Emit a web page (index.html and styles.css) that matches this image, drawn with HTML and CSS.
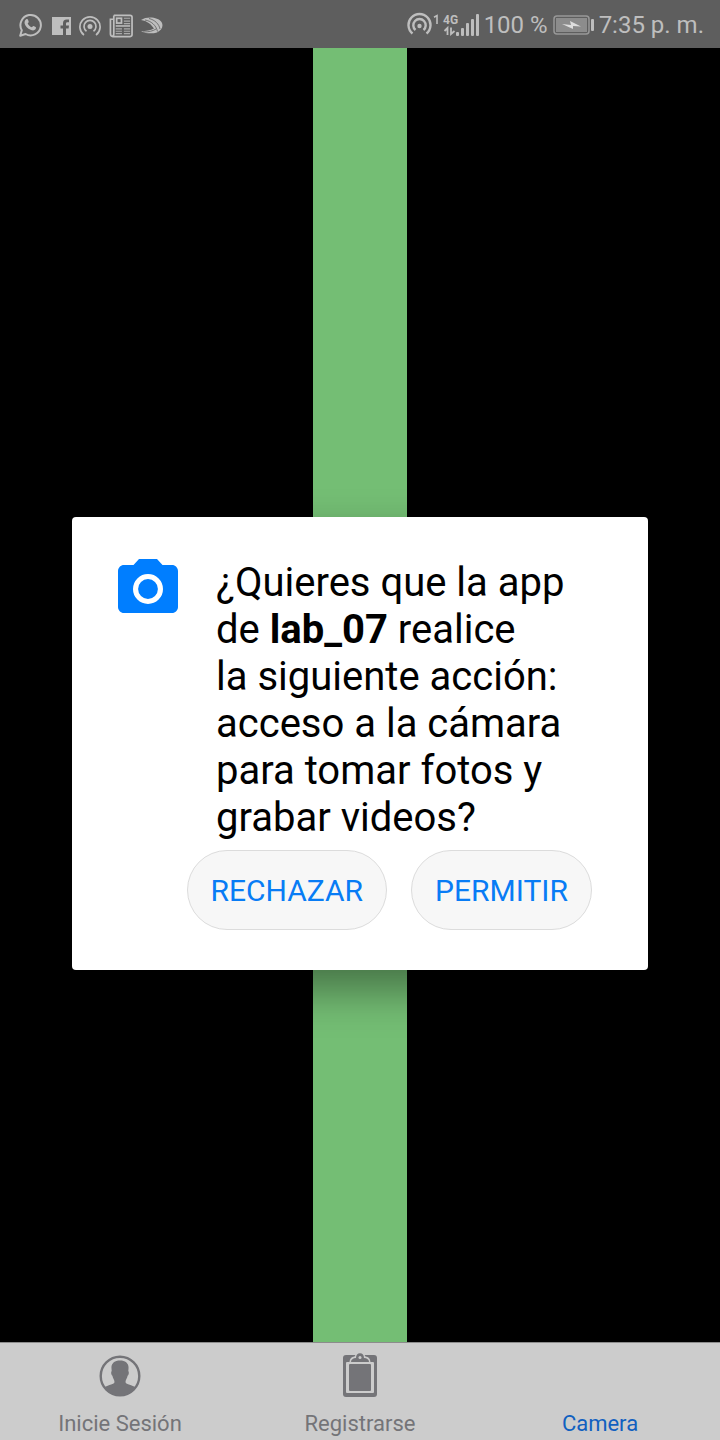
FILE: index.html
```html
<!DOCTYPE html>
<html lang="es">
<head>
<meta charset="utf-8">
<meta name="viewport" content="width=device-width, initial-scale=1">
<title>lab_07</title>
<link rel="stylesheet" href="styles.css">
</head>
<body>
<div class="screen">
  <header class="status">
    <div class="status-left">
      <svg width="24" height="26" viewBox="0 0 24 26" fill="none" stroke="currentColor" stroke-width="2" aria-hidden="true">
        <path d="M1.200 23.800 L2.800 18.200 A10.200 10.200 0 1 1 6.600 22 Z" stroke-linejoin="round"/>
        <path d="M7.200 7.200 C8.200 6.600 8.800 7 9.100 8 L9.700 9.700 C9.900 10.400 8.800 11 8.700 11.500 C9.500 13.300 11 14.700 12.800 15.300 C13.400 15 13.900 13.900 14.600 14.100 L16.600 15.100 C17.300 15.500 16.900 16.900 16.300 17.600 C15.200 18.700 13.400 18.600 11.600 17.800 C8.600 16.500 6.400 14 5.700 11.700 C5.200 9.900 6 7.900 7.200 7.200 Z" fill="currentColor" stroke="none"/>
      </svg>
      <svg width="20" height="26" viewBox="0 0 20 26" aria-hidden="true">
        <path fill="currentColor" d="M1 5 H20 V23 H15 V16.500 H17.600 L18 13.500 H15 V11.800 C15 10.800 15.300 10.300 16.500 10.300 H18 V7.500 H15.800 C13.100 7.500 12 9.100 12 11.300 V13.500 H9.500 V16.500 H12 V23 H1 Z"/>
      </svg>
      <svg width="22" height="26" viewBox="0 0 22 26" fill="none" stroke="currentColor" stroke-width="1.700" aria-hidden="true">
        <path d="M5 23 A10.100 10.100 0 1 1 17 23"/>
        <path d="M7.500 19.200 A6 6 0 1 1 14.500 19.200"/>
        <circle cx="11" cy="14.500" r="2.500" fill="currentColor" stroke="none"/>
      </svg>
      <svg width="24" height="26" viewBox="0 0 25 26" fill="none" stroke="currentColor" stroke-width="1.800" aria-hidden="true">
        <path d="M5 3 H22 Q24 3 24 5 V23 Q24 25 22 25 H4 Q1.500 25 1.500 22 V7 H5 M5 3 V22 Q5 24.500 3.500 24.500"/>
        <rect x="8" y="6" width="5" height="5"/>
        <path stroke-width="1.200" opacity=".8" d="M15.500 6 H22 M15.500 9 H22 M15.500 11.500 H22 M7 17 H13.500 M7 19.500 H13.500 M7 22 H13.500 M15.500 17 H22 M15.500 19.500 H22 M15.500 22 H22"/>
        <path stroke-width="1.600" d="M7 14 H22"/>
      </svg>
      <svg width="22" height="26" viewBox="0 0 22 26" aria-hidden="true">
        <path fill="currentColor" d="M0 8 C6 4 17 5 20.500 10 C23 14 20.500 18.500 16 20.500 C11 22 5 21.500 0 19.500 C5 19 9.500 18.500 13 16.500 C10 12 6 9 0 8 Z"/>
        <g fill="none" stroke="#5e5e5e" stroke-width="0.800">
          <path d="M4 8 C10 9 15 13 16.500 19.500"/>
          <path d="M8 6.500 C14 8 18 12 19 17"/>
          <path d="M2 20 C8 20 12 19 15 17"/>
        </g>
      </svg>
    </div>
    <div class="status-right">
      <svg width="72" height="28" viewBox="0 0 72 28" fill="none" stroke="currentColor" aria-hidden="true">
        <g stroke-width="2.400">
          <path d="M5.500 22.500 A11 11 0 1 1 19.500 22.500"/>
          <path d="M8.500 19 A6.200 6.200 0 1 1 16.500 19"/>
          <circle cx="12.500" cy="15" r="2.200" fill="currentColor" stroke="none"/>
        </g>
        <path d="M27 6.200 L30 4.500 V13" stroke-width="1.600"/>
        <text class="signal-text" x="36" y="13">4G</text>
        <path stroke-width="1.800" d="M40.500 24 V17 L37.500 20 M44 16.500 V23 L47.500 20"/>
        <g fill="currentColor" stroke="none">
          <rect x="49" y="21" width="3" height="4" rx="1"/>
          <rect x="54" y="17" width="3" height="8" rx="1"/>
          <rect x="59" y="12" width="3" height="13" rx="1"/>
          <rect x="64" y="8" width="3" height="17" rx="1"/>
          <rect x="69" y="3" width="3" height="22" rx="1"/>
        </g>
      </svg>
      <span>100 %</span>
      <svg width="41" height="20" viewBox="0 0 41 20" aria-hidden="true">
        <rect x="1" y="1" width="35" height="18" rx="3" fill="none" stroke="#989898" stroke-width="1.500"/>
        <rect x="3" y="3" width="31" height="14" fill="#8c8c8c"/>
        <path d="M9 9 L18 10 L17 6 L28 11.500 L20 11 L20 14 Z" fill="#dedede"/>
        <rect x="38" y="4" width="3" height="12" rx="1" fill="currentColor"/>
      </svg>
      <span>7:35 p. m.</span>
    </div>
  </header>

  <main class="stage">
    <div class="strip"></div>
  </main>

  <nav class="tabs">
    <a class="tab" href="#login">
      <svg width="42" height="42" viewBox="0 0 42 42" aria-hidden="true">
        <circle cx="21" cy="21" r="19.300" fill="none" stroke="currentColor" stroke-width="2.400"/>
        <path fill="currentColor" d="M21 5.500 C26.500 5.500 30 8.500 29.500 13.500 L29.300 16 C30.300 17 29.800 20 28.600 20.800 C28.200 23.500 26.500 25 26.500 27 C26.500 29.500 32 29.500 37 32.500 A20 20 0 0 1 5 32.500 C10 29.500 15.500 29.500 15.500 27 C15.500 25 13.800 23.500 13.400 20.800 C12.200 20 11.700 17 12.700 16 L12.500 13.500 C12 8.500 15.500 5.500 21 5.500 Z"/>
      </svg>
      <span>Inicie Sesión</span>
    </a>
    <a class="tab" href="#register">
      <svg width="34" height="44" viewBox="0 0 34 44" aria-hidden="true">
        <rect x="0" y="2" width="34" height="42" rx="3" fill="currentColor"/>
        <rect x="3" y="9" width="28" height="31" rx="1" fill="#ccc"/>
        <rect x="6" y="11" width="22" height="27" rx="1" fill="currentColor"/>
        <path fill="#ccc" d="M6.500 10 C6.500 5.500 8.500 4 11.500 3.500 C12.500 1 14.500 0 17 0 C19.500 0 21.500 1 22.500 3.500 C25.500 4 27.500 5.500 27.500 10 Z"/>
        <path fill="currentColor" d="M8 9 C8 6.500 10 5.200 13 5 C13 2 14.500 0.300 17 0.300 C19.500 0.300 21 2 21 5 C24 5.200 26 6.500 26 9 Z"/>
        <circle cx="17" cy="4.500" r="1.500" fill="#ccc"/>
      </svg>
      <span>Registrarse</span>
    </a>
    <a class="tab tab-active" href="#camera" aria-current="page"><span>Camera</span></a>
  </nav>

  <div class="overlay">
    <section class="dialog" role="dialog" aria-modal="true" aria-labelledby="question">
      <div class="request">
        <svg class="camera" width="60" height="54" viewBox="2 2 20 18" aria-hidden="true">
          <path fill="#007eff" d="M9 2 L7.170 4 H4 C2.900 4 2 4.900 2 6 V18 C2 19.100 2.900 20 4 20 H20 C21.100 20 22 19.100 22 18 V6 C22 4.900 21.100 4 20 4 H16.830 L15 2 Z"/>
          <circle cx="12" cy="12" r="4.150" fill="none" stroke="#fff" stroke-width="1.700"/>
        </svg>
        <p class="question" id="question">¿Quieres que la app de <strong>lab_07</strong> realice la&nbsp;siguiente acción: acceso a la cámara para tomar fotos y grabar videos?</p>
      </div>
      <div class="actions">
        <button class="action" type="button">RECHAZAR</button>
        <button class="action" type="button">PERMITIR</button>
      </div>
    </section>
  </div>
</div>
</body>
</html>
```
FILE: styles.css
```css
* { box-sizing: border-box; }

body {
  margin: 0;
  background: #000;
  font-family: Roboto, "Noto Sans", sans-serif;
}

.screen {
  position: relative;
  display: flex;
  flex-direction: column;
  min-height: 100vh;
}

.status {
  display: flex;
  align-items: center;
  justify-content: space-between;
  height: 48px;
  padding: 2px 16px 0 19px;
  background: #5e5e5e;
  color: #bebebe;
  font-size: 24px;
  line-height: 30px;
  white-space: nowrap;
}

.status-left,
.status-right {
  display: flex;
  align-items: center;
}

.status-left { gap: 8px; }
.status-right { gap: 5px; }
.status svg { display: block; }

.signal-text {
  fill: currentColor;
  stroke: none;
  font-size: 12px;
  font-weight: 700;
}

.stage {
  display: flex;
  flex: 1;
  justify-content: center;
}

.strip {
  width: 13%;
  background: #74be74;
}

.tabs {
  display: flex;
  height: 98px;
  border-top: 1px solid #8c8c8c;
  background: #ccc;
}

.tab {
  display: flex;
  flex: 1;
  flex-direction: column;
  align-items: center;
  justify-content: flex-end;
  gap: 14px;
  padding-bottom: 3px;
  color: #747478;
  font-size: 22px;
  line-height: 26px;
  text-decoration: none;
}

.tab-active { color: #1060c0; }

.overlay {
  position: absolute;
  inset: 48px 0 1px;
  display: grid;
  place-items: center;
}

.dialog {
  width: 80%;
  padding: 42px 46px 40px;
  border-radius: 4px;
  background: #fff;
  box-shadow: 0 20px 44px rgba(0, 0, 0, 0.4);
}

.request {
  display: flex;
  gap: 38px;
}

.camera { flex: none; }

.question {
  flex: 1;
  margin: 0;
  color: #000;
  font-size: 40px;
  line-height: 47px;
}

.actions {
  display: flex;
  justify-content: flex-end;
  gap: 24px;
  margin-top: 9px;
  padding-right: 10px;
}

.action {
  height: 80px;
  padding: 0 23px;
  border: 1px solid #dcdcdc;
  border-radius: 40px;
  background: #f7f7f7;
  color: #087cf5;
  font-family: inherit;
  font-size: 30px;
}
```
